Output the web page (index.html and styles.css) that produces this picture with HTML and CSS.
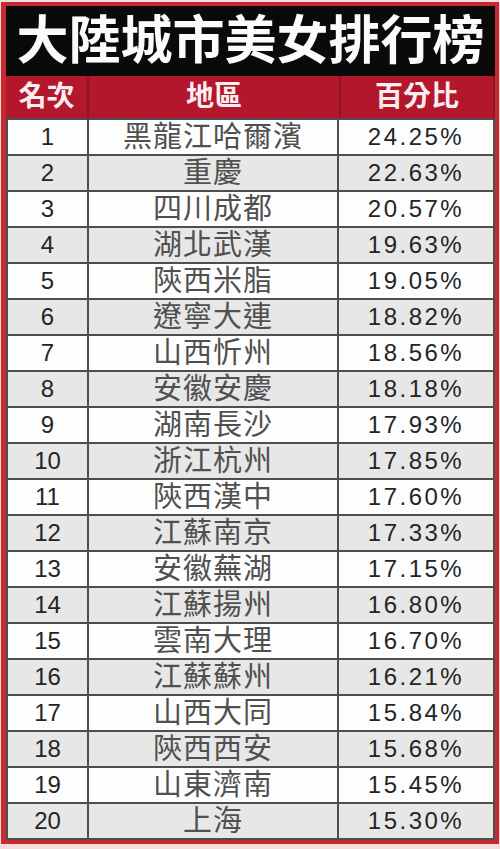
FILE: index.html
```html
<!DOCTYPE html>
<html lang="zh-Hant">
<head>
<meta charset="utf-8">
<title>大陸城市美女排行榜</title>
<link rel="stylesheet" href="styles.css">
</head>
<body>
<div class="frame">
  <h1 class="title">大陸城市美女排行榜</h1>
  <div class="head">
    <div class="hcell">名次</div>
    <div class="hcell">地區</div>
    <div class="hcell">百分比</div>
  </div>
  <div class="table">
    <div class="row"><div class="num">1</div><div class="city">黑龍江哈爾濱</div><div class="pct">24.25%</div></div>
    <div class="row alt"><div class="num">2</div><div class="city">重慶</div><div class="pct">22.63%</div></div>
    <div class="row"><div class="num">3</div><div class="city">四川成都</div><div class="pct">20.57%</div></div>
    <div class="row alt"><div class="num">4</div><div class="city">湖北武漢</div><div class="pct">19.63%</div></div>
    <div class="row"><div class="num">5</div><div class="city">陝西米脂</div><div class="pct">19.05%</div></div>
    <div class="row alt"><div class="num">6</div><div class="city">遼寧大連</div><div class="pct">18.82%</div></div>
    <div class="row"><div class="num">7</div><div class="city">山西忻州</div><div class="pct">18.56%</div></div>
    <div class="row alt"><div class="num">8</div><div class="city">安徽安慶</div><div class="pct">18.18%</div></div>
    <div class="row"><div class="num">9</div><div class="city">湖南長沙</div><div class="pct">17.93%</div></div>
    <div class="row alt"><div class="num">10</div><div class="city">浙江杭州</div><div class="pct">17.85%</div></div>
    <div class="row"><div class="num">11</div><div class="city">陝西漢中</div><div class="pct">17.60%</div></div>
    <div class="row alt"><div class="num">12</div><div class="city">江蘇南京</div><div class="pct">17.33%</div></div>
    <div class="row"><div class="num">13</div><div class="city">安徽蕪湖</div><div class="pct">17.15%</div></div>
    <div class="row alt"><div class="num">14</div><div class="city">江蘇揚州</div><div class="pct">16.80%</div></div>
    <div class="row"><div class="num">15</div><div class="city">雲南大理</div><div class="pct">16.70%</div></div>
    <div class="row alt"><div class="num">16</div><div class="city">江蘇蘇州</div><div class="pct">16.21%</div></div>
    <div class="row"><div class="num">17</div><div class="city">山西大同</div><div class="pct">15.84%</div></div>
    <div class="row alt"><div class="num">18</div><div class="city">陝西西安</div><div class="pct">15.68%</div></div>
    <div class="row"><div class="num">19</div><div class="city">山東濟南</div><div class="pct">15.45%</div></div>
    <div class="row alt"><div class="num">20</div><div class="city">上海</div><div class="pct">15.30%</div></div>
  </div>
</div>
</body>
</html>
```
FILE: styles.css
```css
html, body {
  margin: 0;
  padding: 0;
}
body {
  background: #f3dedb;
  width: 500px;
  height: 849px;
  overflow: hidden;
}
.frame {
  margin: 2px 1px 0 1px;
  border: 4px solid #c62a31;
  border-left-width: 5px;
  background: #f6e6e4;
  display: flex;
  flex-direction: column;
}
.title {
  margin: 0;
  height: 70px;
  background: #0a0a0a;
  color: #fbfbfb;
  font-family: "Liberation Sans", "Noto Sans CJK TC", "Noto Sans CJK SC", sans-serif;
  font-weight: 700;
  font-size: 52px;
  line-height: 70px;
  text-align: center;
}
.head {
  height: 42px;
  display: grid;
  grid-template-columns: 81px 250px 1fr;
  column-gap: 2px;
  background: #8c1424;
  padding: 0 2px 0 0;
}
.hcell {
  background: #b4162c;
  color: #fbeef0;
  font-family: "Liberation Sans", "Noto Sans CJK TC", "Noto Sans CJK SC", sans-serif;
  font-weight: 700;
  font-size: 28px;
  line-height: 42px;
  text-align: center;
}
.table {
  display: grid;
  grid-auto-rows: 34px;
  row-gap: 2px;
  padding: 2px;
  background: #4e4e4e;
}
.row {
  display: grid;
  grid-template-columns: 79px 248px 1fr;
  column-gap: 2px;
}
.row > div {
  background: #fdfdfd;
  text-align: center;
  line-height: 34px;
}
.row.alt > div {
  background: #e7e7e7;
}
.num {
  font-family: "Liberation Sans", Arial, sans-serif;
  font-size: 24px;
  color: #242424;
}
.city {
  font-family: "Liberation Sans", "Noto Sans CJK TC", "Noto Sans CJK SC", sans-serif;
  font-size: 29px;
  color: #505050;
  letter-spacing: 1px;
}
.pct {
  font-family: "Liberation Sans", Arial, sans-serif;
  font-size: 24px;
  color: #242424;
  letter-spacing: 2.5px;
}
```
